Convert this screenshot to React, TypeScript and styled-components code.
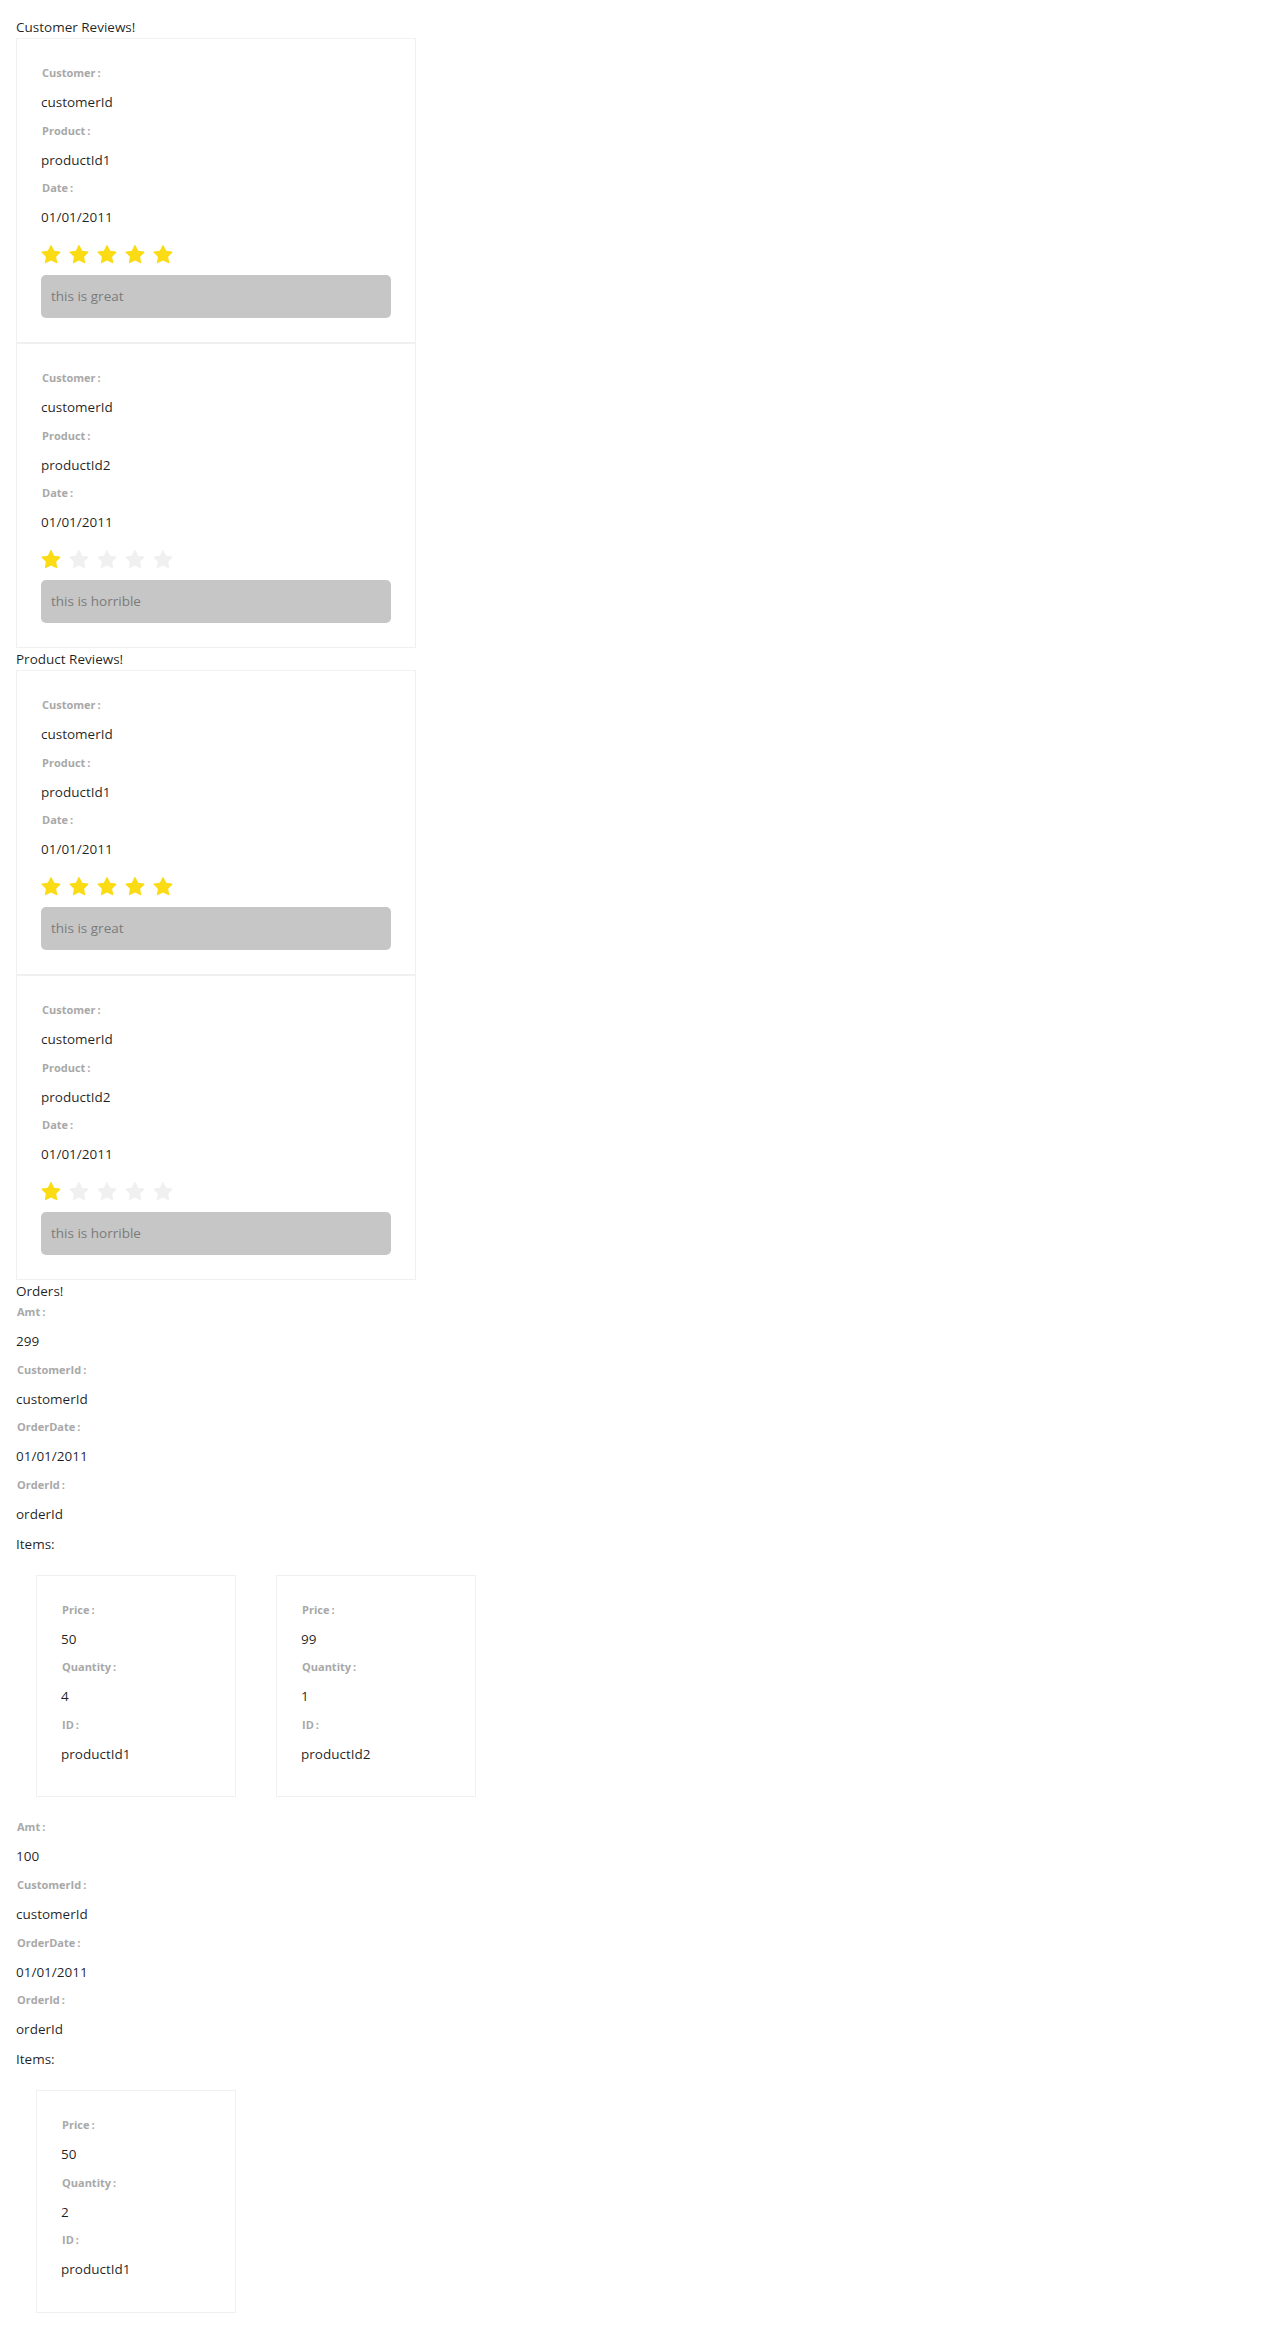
import React from "react";
import styled, { createGlobalStyle } from "styled-components";

const GlobalStyle = createGlobalStyle`
  html, body {
    margin: 0;
    padding: 0;
    background: #ffffff;
  }
  body {
    font-family: "Open Sans", "Noto Sans", "Liberation Sans", sans-serif;
    color: rgba(0, 0, 0, 0.85);
  }
`;

const Page = styled.div`
  padding: 16px 16px 0 16px;
  display: flex;
  flex-direction: column;
  align-items: flex-start;
`;

const SectionTitle = styled.div`
  font-size: 13.5px;
  line-height: 22px;
  color: rgba(0, 0, 0, 0.88);
`;

const ReviewList = styled.div`
  width: 400px;
  display: flex;
  flex-direction: column;
`;

const Card = styled.div<{ $width: number }>`
  box-sizing: border-box;
  width: ${(p) => p.$width}px;
  border: 1px solid #f0f0f0;
  background: #ffffff;
  padding: 24px;
  display: flex;
  flex-direction: column;
`;

const Field = styled.div`
  display: flex;
  flex-direction: column;
  padding-bottom: 7.67px;
`;

const Label = styled.div`
  font-size: 11px;
  font-weight: 700;
  line-height: 20px;
  color: #a8a8a8;
  margin-bottom: 8px;
  margin-left: 1px;
`;

const Colon = styled.span`
  margin-left: 2px;
`;

const Value = styled.div`
  font-size: 13.5px;
  line-height: 22px;
  color: rgba(0, 0, 0, 0.88);
`;

const Stars = styled.div`
  display: flex;
  gap: 8px;
  height: 20px;
  margin-top: 9px;
`;

const StarIcon = styled.svg<{ $on: boolean }>`
  width: 20px;
  height: 20px;
  fill: ${(p) => (p.$on ? "#fadb14" : "#f0f0f0")};
`;

const Comment = styled.div`
  margin-top: 10px;
  height: 43px;
  box-sizing: border-box;
  border-radius: 5px;
  background: #c6c6c6;
  padding: 0 10px;
  font-size: 13.5px;
  line-height: 43px;
  color: #7b7b7b;
`;

const OrderBlock = styled.div`
  display: flex;
  flex-direction: column;
`;

const ItemsTitle = styled.div`
  font-size: 13.5px;
  line-height: 22px;
  color: rgba(0, 0, 0, 0.88);
`;

const ItemsRow = styled.div`
  display: flex;
  flex-wrap: wrap;
`;

const ItemCard = styled(Card)`
  margin: 20px;
`;

const STAR_PATH =
  "M908.1 353.1l-253.9-36.9L540.7 86.1c-3.1-6.3-8.2-11.4-14.5-14.5-15.8-7.8-35-1.3-42.9 14.5L369.8 316.2l-253.9 36.9c-7 1-13.4 4.3-18.3 9.3a32.05 32.05 0 00.6 45.3l183.7 179.1-43.4 252.9a31.95 31.95 0 0046.4 33.7L512 754l227.1 119.4c6.2 3.3 13.4 4.4 20.3 3.2 17.4-3 29.1-19.5 26.1-36.9l-43.4-252.9 183.7-179.1c5-4.9 8.3-11.3 9.3-18.3 2.7-17.5-9.5-33.7-27-36.3z";

const Star = ({ on }: { on: boolean }) => (
  <StarIcon $on={on} viewBox="64 64 896 896" aria-hidden="true">
    <path d={STAR_PATH} />
  </StarIcon>
);

const Desc = ({ label, value }: { label: string; value: string }) => (
  <Field>
    <Label>
      {label}
      <Colon>:</Colon>
    </Label>
    <Value>{value}</Value>
  </Field>
);

type Review = { customer: string; product: string; date: string; rating: number; text: string };

const reviews: Review[] = [
  { customer: "customerId", product: "productId1", date: "01/01/2011", rating: 5, text: "this is great" },
  { customer: "customerId", product: "productId2", date: "01/01/2011", rating: 1, text: "this is horrible" },
];

type Item = { price: string; quantity: string; id: string };
type Order = { amt: string; customerId: string; orderDate: string; orderId: string; items: Item[] };

const orders: Order[] = [
  {
    amt: "299",
    customerId: "customerId",
    orderDate: "01/01/2011",
    orderId: "orderId",
    items: [
      { price: "50", quantity: "4", id: "productId1" },
      { price: "99", quantity: "1", id: "productId2" },
    ],
  },
  {
    amt: "100",
    customerId: "customerId",
    orderDate: "01/01/2011",
    orderId: "orderId",
    items: [{ price: "50", quantity: "2", id: "productId1" }],
  },
];

const ReviewCard = ({ r }: { r: Review }) => (
  <Card $width={400}>
    <Desc label="Customer" value={r.customer} />
    <Desc label="Product" value={r.product} />
    <Desc label="Date" value={r.date} />
    <Stars>
      {[1, 2, 3, 4, 5].map((n) => (
        <Star key={n} on={n <= r.rating} />
      ))}
    </Stars>
    <Comment>{r.text}</Comment>
  </Card>
);

const ReviewSection = ({ title }: { title: string }) => (
  <>
    <SectionTitle>{title}</SectionTitle>
    <ReviewList>
      {reviews.map((r, i) => (
        <ReviewCard key={i} r={r} />
      ))}
    </ReviewList>
  </>
);

export default function App() {
  return (
    <>
      <GlobalStyle />
      <Page>
        <ReviewSection title="Customer Reviews!" />
        <ReviewSection title="Product Reviews!" />
        <SectionTitle>Orders!</SectionTitle>
        {orders.map((o, i) => (
          <OrderBlock key={i}>
            <Desc label="Amt" value={o.amt} />
            <Desc label="CustomerId" value={o.customerId} />
            <Desc label="OrderDate" value={o.orderDate} />
            <Desc label="OrderId" value={o.orderId} />
            <ItemsTitle>Items:</ItemsTitle>
            <ItemsRow>
              {o.items.map((it, j) => (
                <ItemCard key={j} $width={200}>
                  <Desc label="Price" value={it.price} />
                  <Desc label="Quantity" value={it.quantity} />
                  <Desc label="ID" value={it.id} />
                </ItemCard>
              ))}
            </ItemsRow>
          </OrderBlock>
        ))}
      </Page>
    </>
  );
}
